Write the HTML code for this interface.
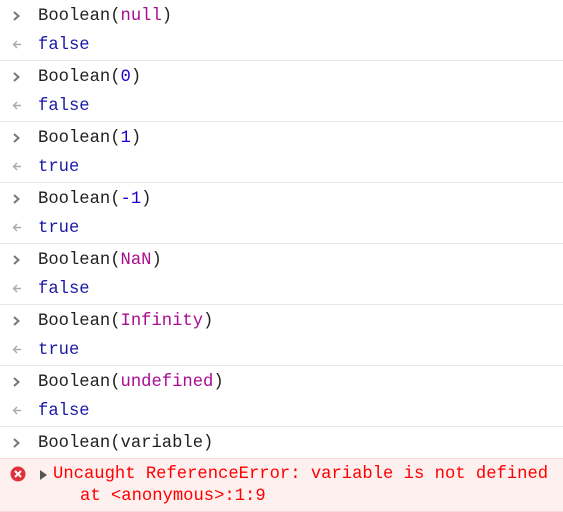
<!DOCTYPE html>
<html><head><style>
body{margin:0;background:#fff;width:563px;height:512px;overflow:hidden;font-family:"Liberation Mono","DejaVu Sans Mono",monospace;font-size:17.2px;color:#222}
.g{height:60px;border-bottom:1px solid #e8e8e8;position:relative}
.l{position:absolute;left:38px;height:30px;line-height:30px;white-space:pre}
.i{top:2px}.o{top:31px;color:#1a1aa6}
.ar{position:absolute;left:12px;width:10px;height:30px}
.m{color:#a90d91}.n{color:#1c00cf}
.err{position:absolute;top:458px;left:0;width:563px;height:52px;background:#fff0f0;border-top:1px solid #ffd6d6;border-bottom:1px solid #ffd6d6;color:#f00}
</style></head><body>
<div id="c"></div>
<script>
var d=[['Boolean(<span class="m">null</span>)','false'],['Boolean(<span class="n">0</span>)','false'],['Boolean(<span class="n">1</span>)','true'],['Boolean(<span class="n">-1</span>)','true'],['Boolean(<span class="m">NaN</span>)','false'],['Boolean(<span class="m">Infinity</span>)','true'],['Boolean(<span class="m">undefined</span>)','false']];
var h='';
var inA='<svg class="ar" style="top:1px" viewBox="0 0 10 30"><path d="M2 11 L6.5 15 L2 19" stroke="#777" stroke-width="2" fill="none"/></svg>';
var outA='<svg class="ar" style="top:30px" viewBox="0 0 10 30"><path d="M5 11 L1.5 14.5 L5 18 M2 14.5 H9" stroke="#aaa" stroke-width="1.4" fill="none"/></svg>';
d.forEach(function(x){h+='<div class="g">'+inA+'<div class="l i">'+x[0]+'</div>'+outA+'<div class="l o">'+x[1]+'</div></div>';});
h+='<div style="position:relative;height:30px">'+inA+'<div class="l i">Boolean(variable)</div></div>';
document.getElementById('c').innerHTML=h;
</script>
<div class="err">
<svg style="position:absolute;left:10px;top:7px" width="16" height="16" viewBox="0 0 16 16"><circle cx="8" cy="8" r="7.5" fill="#e0303a"/><path d="M5 5 L11 11 M11 5 L5 11" stroke="#fff" stroke-width="2"/></svg>
<svg style="position:absolute;left:40px;top:11px" width="8" height="10" viewBox="0 0 8 10"><path d="M0 0 L7 5 L0 10Z" fill="#555"/></svg>
<div style="position:absolute;left:53px;top:5px;line-height:22px;white-space:pre">Uncaught ReferenceError: variable is not defined</div>
<div style="position:absolute;left:80px;top:27px;line-height:22px;white-space:pre">at &lt;anonymous&gt;:1:9</div>
</div>
</body></html>
